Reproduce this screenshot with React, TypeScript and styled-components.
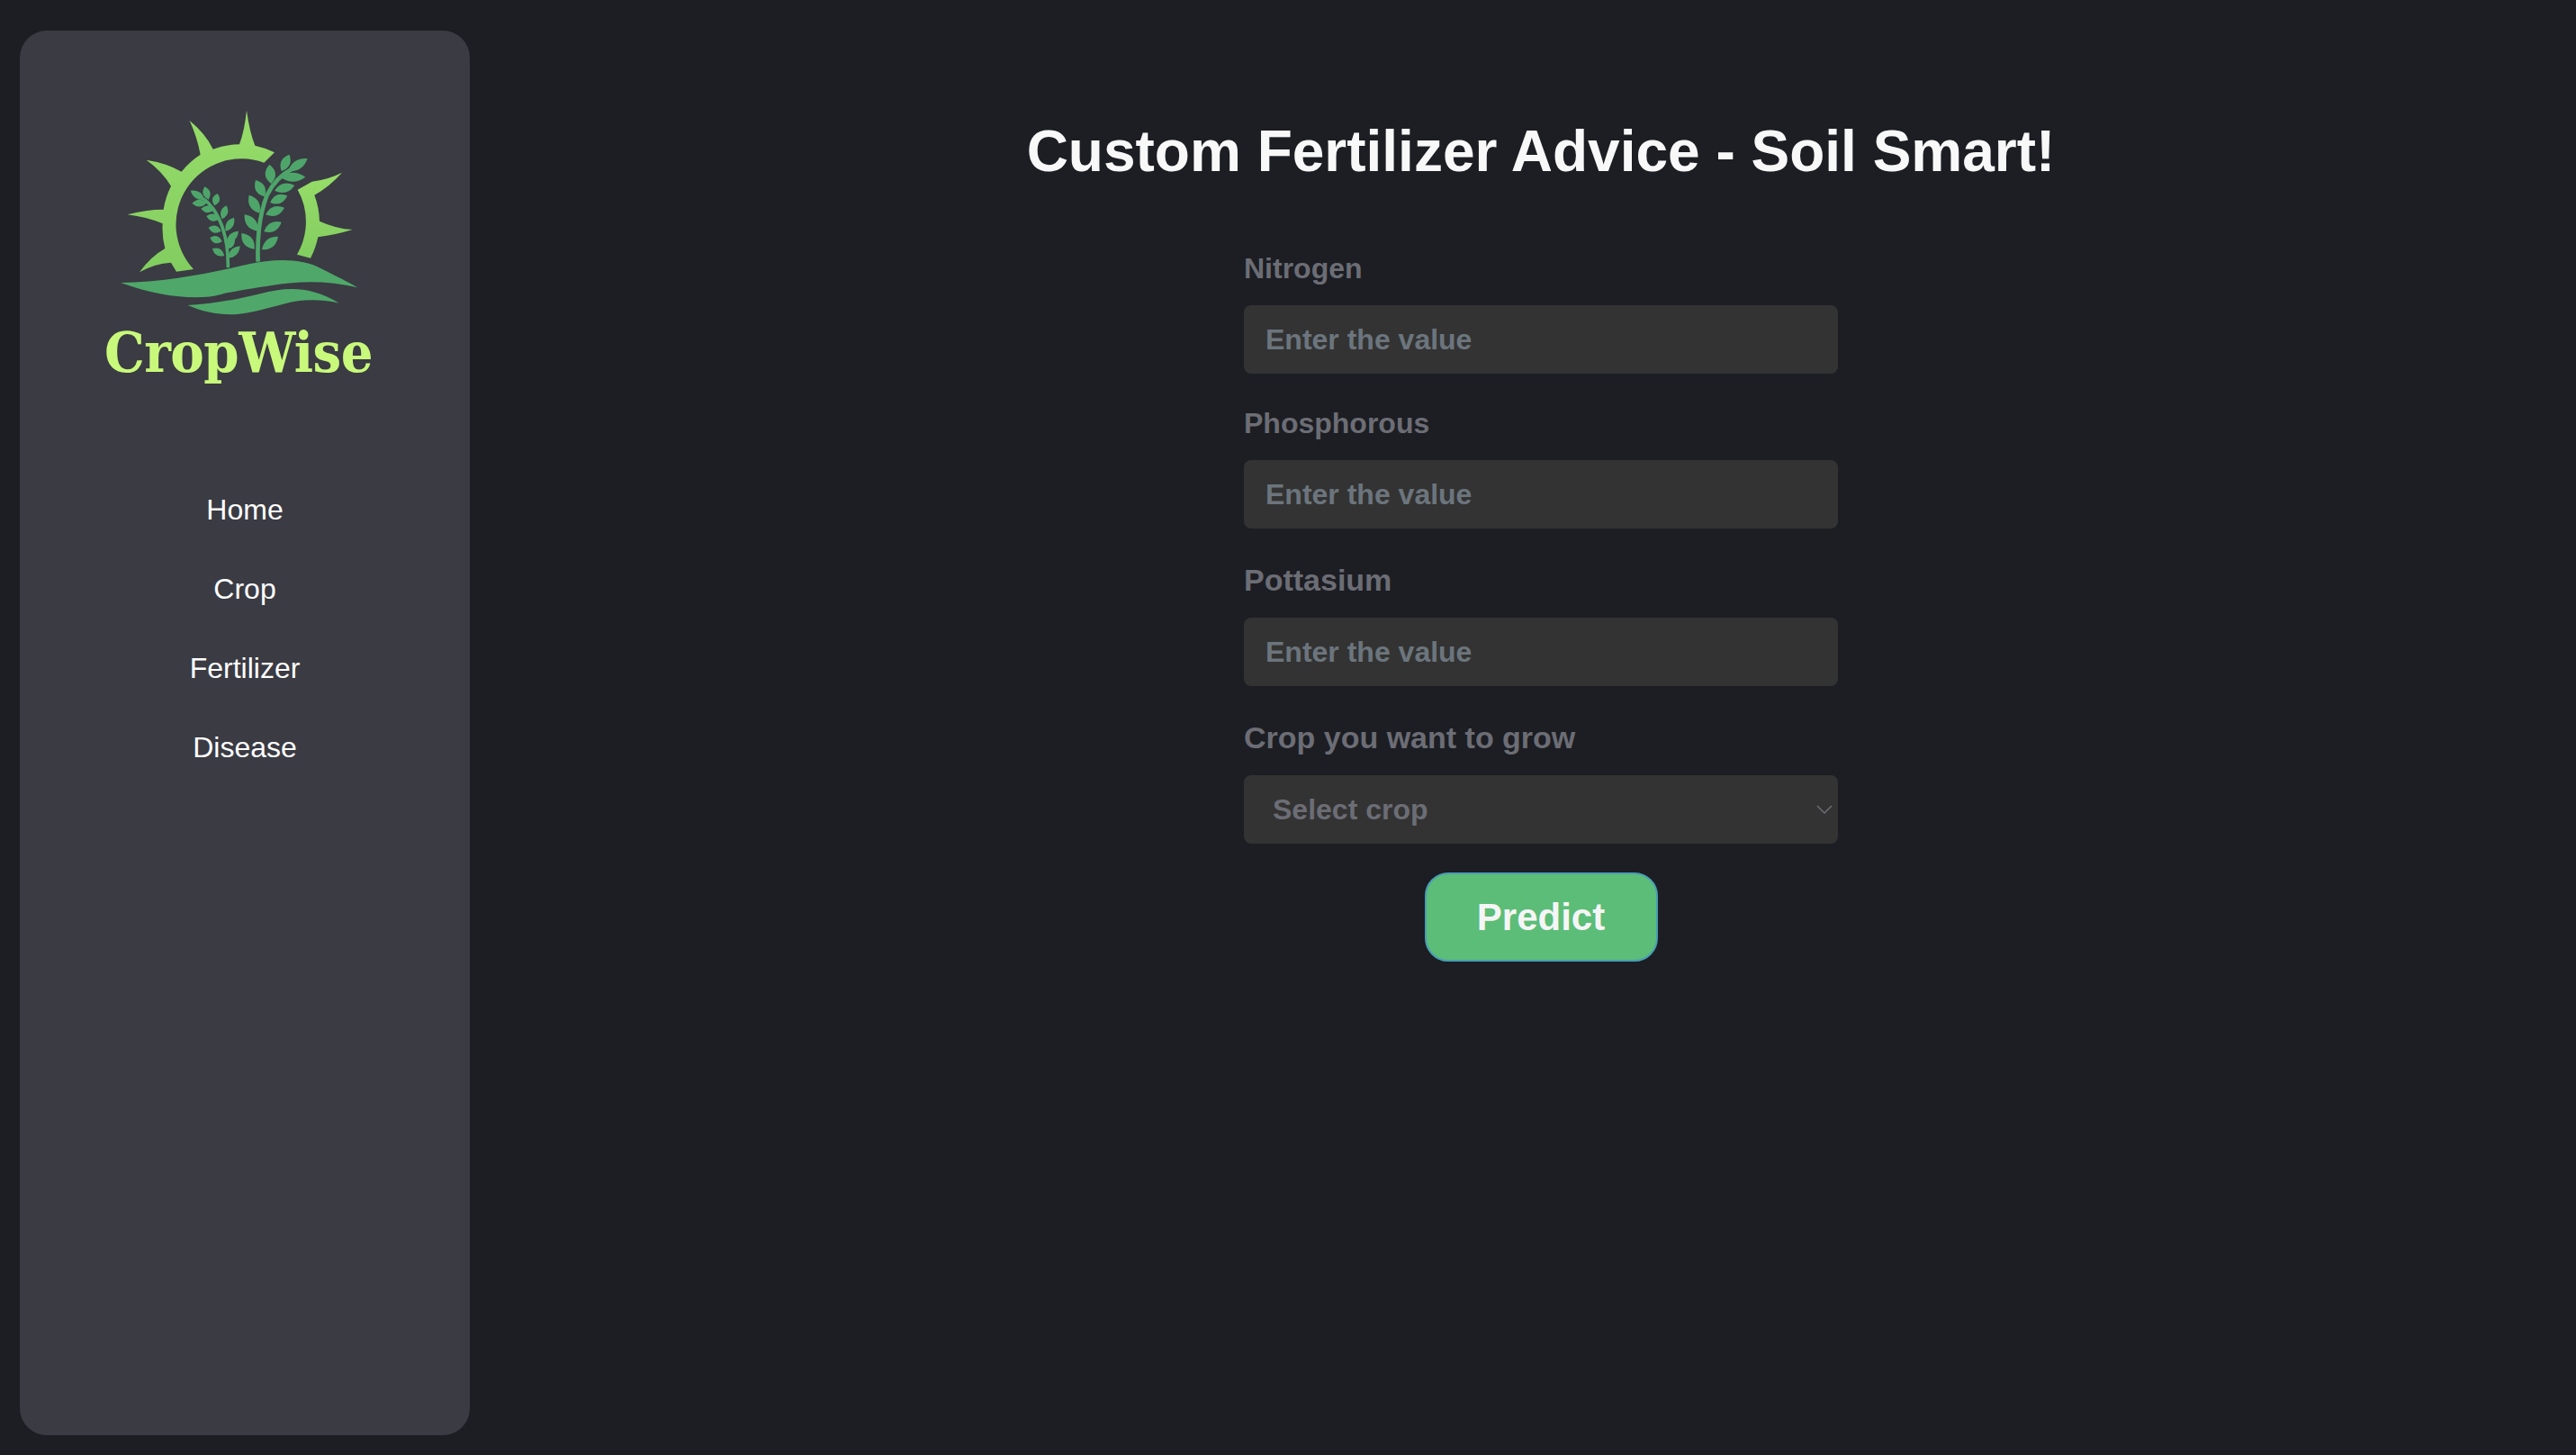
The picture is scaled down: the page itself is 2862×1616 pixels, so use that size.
import React from 'react';
import styled, { createGlobalStyle } from 'styled-components';

const GlobalStyle = createGlobalStyle`
  html, body {
    margin: 0;
    padding: 0;
    background: #1c1e23;
  }
  * { box-sizing: border-box; }
`

const Page = styled.div`
  display: flex;
  height: 1616px;
  padding: 34px 0 22px 22px;
  font-family: "Liberation Sans", Arial, sans-serif;
  overflow: hidden;
`

const Sidebar = styled.aside`
  flex: 0 0 500px;
  display: flex;
  flex-direction: column;
  align-items: center;
  background: #3a3b43;
  border-radius: 30px;
  padding-top: 66px;
`

const Logo = styled.div`
  width: 360px;
  margin-left: -4px;
  display: flex;
  flex-direction: column;
  align-items: center;
`

const LogoMark = styled.svg`
  display: block;
  width: 360px;
  height: 257px;
`

const LogoText = styled.div`
  font-family: "DejaVu Serif Condensed", "DejaVu Serif", serif;
  font-weight: 700;
  font-stretch: condensed;
  font-size: 62.5px;
  line-height: 68px;
  letter-spacing: -0.5px;
  color: #c9f97b;
  margin-left: -10px;
`

const Nav = styled.nav`
  display: flex;
  flex-direction: column;
  align-items: center;
  gap: 52px;
  margin-top: 123px;
`

const NavLink = styled.a`
  font-size: 32px;
  line-height: 36px;
  color: #ffffff;
  text-decoration: none;
`

const Main = styled.main`
  flex: 1;
  margin-left: 40px;
  display: flex;
  flex-direction: column;
  align-items: center;
`

const Title = styled.h1`
  margin: 97px 0 75px;
  font-size: 64px;
  line-height: 74px;
  font-weight: 700;
  color: #f8f8f8;
`

const Form = styled.form`
  width: 660px;
  display: flex;
  flex-direction: column;
  align-items: center;
`

const Field = styled.div`
  width: 100%;
  margin-bottom: 37px;

  &:last-of-type {
    margin-bottom: 32px;
  }
`

const Label = styled.label<{ $large?: boolean }>`
  display: block;
  font-size: ${props => props.$large ? '34px' : '32px'};
  line-height: ${props => props.$large ? '40px' : '37px'};
  font-weight: 700;
  color: #6c6d75;
  margin-bottom: 22px;
`

const Input = styled.input`
  display: block;
  width: 100%;
  height: 76px;
  padding: 0 24px;
  border: none;
  border-radius: 8px;
  background: #333333;
  font: 700 32px "Liberation Sans", Arial, sans-serif;
  color: #ffffff;

  &::placeholder {
    color: #6c757d;
    opacity: 1;
  }
`

const SelectBox = styled.div`
  position: relative;
  display: flex;
  align-items: center;
  width: 100%;
  height: 76px;
  padding-left: 32px;
  border-radius: 8px;
  background: #333333;
  font-size: 32px;
  font-weight: 700;
  color: #6c6d75;
`

const Chevron = styled.svg`
  position: absolute;
  top: 32px;
  right: 6px;
  width: 18px;
  height: 12px;
`

const PredictButton = styled.button`
  width: 259px;
  height: 99px;
  border: 2px solid #4a9db5;
  border-radius: 26px;
  background: #5cbd78;
  font: 700 42px "Liberation Sans", Arial, sans-serif;
  color: #f5f5f5;
`

type Leaf = [number, number, number, number, number?];

// base x, base y, tip x, tip y, width
const leaves: Leaf[] = [
  [412, 365, 365, 335], [425, 365, 412, 322], [445, 385, 455, 345], [420, 375, 370, 378],
  [470, 430, 485, 385], [445, 398, 400, 395], [482, 470, 510, 425], [462, 430, 418, 420],
  [484, 510, 525, 470], [467, 470, 425, 458], [485, 530, 512, 492], [470, 505, 430, 492],
  [490, 560, 530, 520], [478, 552, 438, 528],
  [690, 270, 755, 228, 30], [668, 270, 695, 215, 30], [634, 312, 628, 248, 34], [665, 290, 748, 290, 30],
  [645, 335, 712, 318, 30], [612, 355, 582, 300, 32], [630, 375, 688, 352, 30], [595, 410, 560, 350, 32],
  [615, 415, 678, 392, 30], [590, 470, 545, 415, 32], [610, 472, 668, 440, 30], [578, 530, 535, 477, 32],
  [603, 532, 657, 488, 30],
];

const leafPath = ([x1, y1, x2, y2, w = 24]: Leaf) => {
  const dx = x2 - x1;
  const dy = y2 - y1;
  const len = Math.hypot(dx, dy);
  const nx = (-dy / len) * w;
  const ny = (dx / len) * w;
  const mx = x1 + dx * 0.5;
  const my = y1 + dy * 0.5;
  return `M${x1} ${y1}Q${mx + nx} ${my + ny} ${x2} ${y2}Q${mx - nx} ${my - ny} ${x1} ${y1}Z`;
};

const LogoDrawing = () => (
  <LogoMark viewBox="0 0 1080 771">
    <defs>
      <linearGradient id="sun" x1="0" y1="0" x2="0" y2="1">
        <stop offset="0" stopColor="#97dd69" />
        <stop offset="1" stopColor="#82cd60" />
      </linearGradient>
    </defs>
    <path
      fill="url(#sun)"
      d="M375 597A219 219 0 0 1 610 242L645 208A262 262 0 0 0 580 185Q562 140 552 68Q545 135 528 181A262 262 0 0 0 440 197Q415 145 362 102Q388 160 398 215A262 262 0 0 0 335 272Q285 243 218 233Q270 270 300 320A262 262 0 0 0 275 398Q215 398 155 415Q220 423 272 445A262 262 0 0 0 280 528Q232 555 195 607Q245 578 300 575L318 605Z"
    />
    <path
      fill="url(#sun)"
      d="M720 548A217 217 0 0 0 722 332L770 305Q825 298 870 275Q828 322 778 350A262 262 0 0 1 795 437Q850 462 905 465Q850 482 790 490A262 262 0 0 1 765 560Z"
    />
    <g fill="none" stroke="#4ea56a" strokeWidth="11">
      <path d="M490 592Q492 470 440 395Q425 375 408 362" />
      <path d="M590 572Q585 440 620 350Q650 290 705 262" strokeWidth="14" />
    </g>
    <g fill="#4ea56a">
      {leaves.map((leaf, i) => (
        <path key={i} d={leafPath(leaf)} />
      ))}
    </g>
    <path
      fill="#4fa869"
      d="M132 642C280 640 430 610 560 580C640 562 740 560 800 595C850 620 890 640 922 658C830 635 730 635 640 650C560 662 500 672 470 680C400 700 280 695 132 642Z"
    />
    <path
      fill="#4fa869"
      d="M355 717C450 712 530 695 600 678C680 658 760 650 860 710C790 695 730 698 680 712C620 728 570 742 520 747C460 750 410 740 355 717Z"
    />
  </LogoMark>
);

const fields = [
  { name: 'Nitrogen', large: false },
  { name: 'Phosphorous', large: false },
  { name: 'Pottasium', large: true },
];
const navItems = ['Home', 'Crop', 'Fertilizer', 'Disease'];

export default function App() {
  return (
    <Page>
      <GlobalStyle />
      <Sidebar>
        <Logo>
          <LogoDrawing />
          <LogoText>CropWise</LogoText>
        </Logo>
        <Nav>
          {navItems.map(item => (
            <NavLink key={item} href="#">{item}</NavLink>
          ))}
        </Nav>
      </Sidebar>
      <Main>
        <Title>Custom Fertilizer Advice - Soil Smart!</Title>
        <Form>
          {fields.map(({ name, large }) => (
            <Field key={name}>
              <Label $large={large}>{name}</Label>
              <Input placeholder="Enter the value" />
            </Field>
          ))}
          <Field>
            <Label $large>Crop you want to grow</Label>
            <SelectBox>
              Select crop
              <Chevron viewBox="0 0 18 12">
                <path d="M1 2l8 8 8-8" fill="none" stroke="#6c6d75" strokeWidth="1.5" />
              </Chevron>
            </SelectBox>
          </Field>
          <PredictButton type="button">Predict</PredictButton>
        </Form>
      </Main>
    </Page>
  );
}
